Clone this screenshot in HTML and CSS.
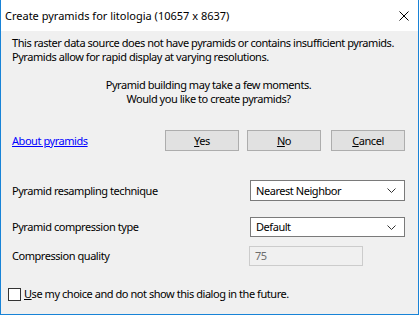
FILE: index.html
```html
<!DOCTYPE html>
<html lang="en">
<head>
    <meta charset="UTF-8">
    <title>Create pyramids</title>
    <link rel="stylesheet" href="styles.css">
</head>
<body>
<div class="dialog">
    <div class="titlebar">
        <span class="title">Create pyramids for litologia (10657 x 8637)</span>
        <svg class="close" width="10" height="10" viewBox="0 0 10 10">
            <path d="M0.5 0.5 L9.5 9.5 M9.5 0.5 L0.5 9.5" stroke="#000" stroke-width="1" fill="none"/>
        </svg>
    </div>
    <div class="content">
        <p class="info">This raster data source does not have pyramids or contains insufficient pyramids.<br>Pyramids allow for rapid display at varying resolutions.</p>
        <p class="question">Pyramid building may take a few moments.<br>Would you like to create pyramids?</p>

        <div class="actions">
            <a class="about" href="#">About pyramids</a>
            <div class="buttons">
                <button class="yes"><u>Y</u>es</button>
                <button class="no"><u>N</u>o</button>
                <button class="cancel"><u>C</u>ancel</button>
            </div>
        </div>

        <div class="row first">
            <label>Pyramid resampling technique</label>
            <div class="select">
                <span>Nearest Neighbor</span>
                <svg width="9" height="5" viewBox="0 0 9 5"><path d="M0.5 0.5 L4.5 4.5 L8.5 0.5" stroke="#333" fill="none"/></svg>
            </div>
        </div>
        <div class="row second">
            <label>Pyramid compression type</label>
            <div class="select">
                <span>Default</span>
                <svg width="9" height="5" viewBox="0 0 9 5"><path d="M0.5 0.5 L4.5 4.5 L8.5 0.5" stroke="#333" fill="none"/></svg>
            </div>
        </div>
        <div class="row third">
            <label>Compression quality</label>
            <div class="quality">75</div>
        </div>

        <label class="remember">
            <span class="check"></span>
            <span><u>U</u>se my choice and do not show this dialog in the future.</span>
        </label>
    </div>
</div>
</body>
</html>
```

FILE: styles.css
```css
body {
    margin: 0;
    font-family: "Noto Sans", "Liberation Sans", sans-serif;
    font-size: 11px;
    color: #000;
}
.dialog {
    width: 419px;
    height: 315px;
    box-sizing: border-box;
    background: #f0f0f0;
    border: 1px solid #1883d7;
    border-top: none;
    display: flex;
    flex-direction: column;
}
.titlebar {
    height: 30px;
    background: #fff;
    display: flex;
    align-items: center;
    justify-content: space-between;
    padding: 0 9px 1px 4px;
}
.title {
    font-size: 11px;
}
.close {
    margin-top: 1px;
}
.content {
    padding: 5px 13px 0 11px;
    line-height: 14px;
    white-space: nowrap;
    letter-spacing: -0.45px;
}
.info {
    margin: 0;
}
.question {
    margin: 14px 0 0 0;
    text-align: center;
}
.actions {
    margin-top: 24px;
    height: 21px;
    display: flex;
    align-items: center;
    justify-content: space-between;
}
.about {
    color: #0000ff;
    text-decoration: underline;
}
.buttons {
    display: flex;
    gap: 8px;
    height: 21px;
}
button {
    width: 74px;
    height: 21px;
    margin: 0;
    padding: 0;
    background: #e1e1e1;
    border: 1px solid #adadad;
    font-family: inherit;
    font-size: 11px;
    letter-spacing: inherit;
    color: #000;
}
.cancel {
    margin-left: 2px;
}
.row {
    display: flex;
    align-items: center;
    justify-content: space-between;
}
.row.first {
    margin-top: 29px;
    height: 21px;
}
.row.second {
    margin-top: 16px;
    height: 20px;
}
.row.third {
    margin-top: 9px;
    height: 20px;
    justify-content: flex-start;
}
.row.third label {
    width: 237px;
}
.select {
    width: 155px;
    height: 100%;
    box-sizing: border-box;
    background: #fff;
    border: 1px solid #7a7a7a;
    display: flex;
    align-items: center;
    justify-content: space-between;
    padding: 0 8px 0 5px;
}
.quality {
    width: 114px;
    height: 100%;
    box-sizing: border-box;
    border: 1px solid #cccccc;
    color: #6d6d6d;
    display: flex;
    align-items: center;
    padding-left: 5px;
}
.remember {
    margin: 21px 0 0 -4px;
    display: flex;
    align-items: center;
    gap: 3px;
}
.check {
    width: 13px;
    height: 13px;
    box-sizing: border-box;
    border: 1px solid #333;
    background: #fff;
}
```
